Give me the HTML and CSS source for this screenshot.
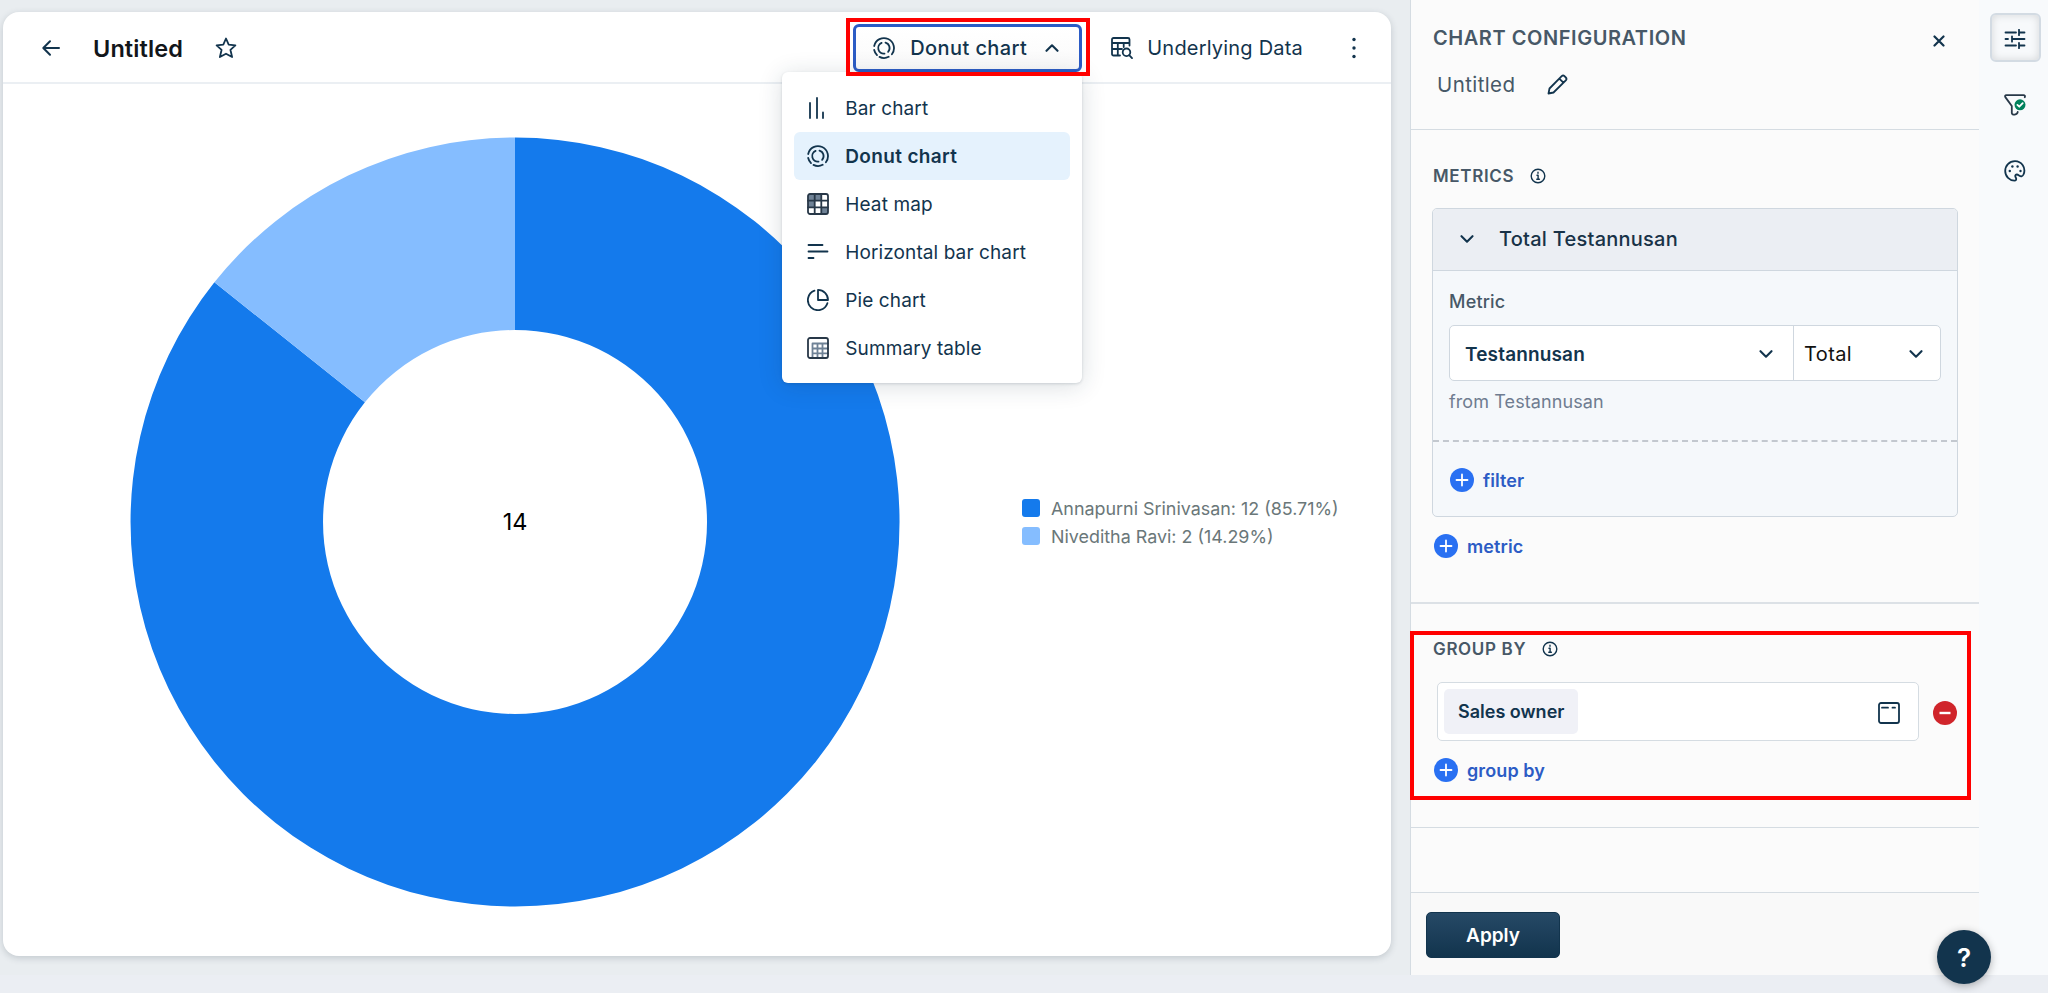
FILE: index.html
```html
<!DOCTYPE html>
<html lang="en">
<head>
    <meta charset="UTF-8">
    <meta name="viewport" content="width=device-width, initial-scale=1.0">
    <title>Untitled - Chart</title>
    <link rel="stylesheet" href="styles.css">
</head>
<body>
    <!-- Shared icons -->
    <svg class="defs" width="0" height="0">
        <symbol id="icon-donut" viewBox="0 0 22 22">
            <path d="M1.200 9A10 10 0 1 1 18.900 17.200M15.700 19.800A10 10 0 0 1 6.500 19.900M4 18.100A10 10 0 0 1 1.200 13"/>
            <path d="M8.600 5.900A5.600 5.600 0 0 0 11.500 16.600M12.500 5.600A5.600 5.600 0 0 1 15.100 14.800"/>
        </symbol>
        <symbol id="icon-down" viewBox="0 0 14 8">
            <path d="M1.500 1.200 7 6.700l5.500-5.500"/>
        </symbol>
        <symbol id="icon-info" viewBox="0 0 16 16">
            <circle cx="8" cy="8" r="6.800"/>
            <path d="M7 7.200H8.100V11.300M6.800 11.300h2.600M8 4.300v.9"/>
        </symbol>
        <symbol id="icon-plus" viewBox="0 0 24 24">
            <circle cx="12" cy="12" r="12" fill="#2970f2" stroke="none"/>
            <path d="M12 6.500v11M6.500 12h11" stroke="#fff"/>
        </symbol>
    </svg>

    <div class="page">
        <main class="chart-card">
            <header class="chart-header">
                <svg class="icon back" width="20" height="18" viewBox="0 0 20 18"><path d="M18 9H3M9 2.300 2.300 9 9 15.700"/></svg>
                <h1>Untitled</h1>
                <svg class="icon star" width="22" height="22" viewBox="0 0 22 22"><path d="M11 1.500l2.700 6.100 6.700.7-5 4.500 1.700 7.200L11 16.700 4.900 20l1.700-7.200-5-4.500 6.700-.7z"/></svg>

                <div class="type-picker">
                    <button class="type-button">
                        <svg class="icon" width="22" height="22"><use href="#icon-donut"/></svg>
                        <span>Donut chart</span>
                        <svg class="icon chevron up" width="14" height="8"><use href="#icon-down"/></svg>
                    </button>
                    <div class="highlight highlight-type"></div>
                    <ul class="type-menu">
                        <li>
                            <svg class="icon" width="22" height="22" viewBox="0 0 22 22"><path d="M3 6v15M10 1v20M16 15.500V21"/></svg>
                            Bar chart
                        </li>
                        <li class="selected">
                            <svg class="icon" width="22" height="22"><use href="#icon-donut"/></svg>
                            Donut chart
                        </li>
                        <li>
                            <svg class="icon dark" width="22" height="22" viewBox="0 0 22 22">
                                <path d="M1 1h13v7H8v6H1zM14 14h7v7h-7z" fill="#6f8296" stroke="none"/>
                                <rect x="1" y="1" width="20" height="20" rx="2"/>
                                <path d="M7.700 1v20M14.300 1v20M1 7.700h20M1 14.300h20"/>
                            </svg>
                            Heat map
                        </li>
                        <li>
                            <svg class="icon" width="22" height="22" viewBox="0 0 22 22"><path d="M1.500 4h14M1.500 10.500h19M1.500 17h5"/></svg>
                            Horizontal bar chart
                        </li>
                        <li>
                            <svg class="icon" width="22" height="22" viewBox="0 0 22 22"><path d="M7.500 1.700A10 10 0 1 0 20.400 14.200M11 .900V11h10A10 10 0 0 0 11 .9z"/></svg>
                            Pie chart
                        </li>
                        <li>
                            <svg class="icon dark" width="22" height="22" viewBox="0 0 22 22">
                                <path d="M5.500 21V6.500H21M5.500 11.500H21M5.500 16.300H21M10.500 6.500V21M15.500 6.500V21" stroke="#6f8296"/>
                                <rect x="1" y="1" width="20" height="20" rx="2"/>
                            </svg>
                            Summary table
                        </li>
                    </ul>
                </div>

                <button class="data-button">
                    <svg class="icon" width="22" height="22" viewBox="0 0 22 22">
                        <path d="M9 18.500H2.500A1.500 1.500 0 0 1 1 17V2.500A1.500 1.500 0 0 1 2.500 1H17a1.500 1.500 0 0 1 1.500 1.500V8.500M1 6h17.500M1 12h10M6.800 6v12.500M12.700 6v4"/>
                        <circle cx="15.500" cy="15.300" r="3.800"/>
                        <path d="M18.200 18.200 21 21.200"/>
                    </svg>
                    <span>Underlying Data</span>
                </button>
                <svg class="dots" width="4" height="22" viewBox="0 0 4 22"><circle cx="2" cy="2.500" r="1.700"/><circle cx="2" cy="11" r="1.700"/><circle cx="2" cy="19.500" r="1.700"/></svg>
            </header>

            <div class="chart-body">
                <svg class="donut" width="770" height="770" viewBox="-385 -385 770 770">
                    <path fill="#147aec" d="M0-384.500A384.500 384.500 0 1 1-300.600-239.700L-150.100-119.700A192 192 0 1 0 0-192z"/>
                    <path fill="#85bdff" d="M0-384.500A384.500 384.500 0 0 0-300.600-239.700L-150.100-119.700A192 192 0 0 1 0-192z"/>
                    <text x="0" y="8" text-anchor="middle">14</text>
                </svg>
                <ul class="legend">
                    <li><span class="swatch swatch-1"></span>Annapurni Srinivasan: 12 (85.71%)</li>
                    <li><span class="swatch swatch-2"></span>Niveditha Ravi: 2 (14.29%)</li>
                </ul>
            </div>
        </main>

        <aside class="config">
            <section class="config-head">
                <div class="config-title">
                    <h2>CHART CONFIGURATION</h2>
                    <svg class="icon close" width="12" height="12" viewBox="0 0 12 12"><path d="M1.500 1.500l9 9M10.500 1.500l-9 9"/></svg>
                </div>
                <div class="config-name">
                    <span>Untitled</span>
                    <svg class="icon" width="21" height="21" viewBox="0 0 21 21"><path d="M1.500 19.500l1-5L14.700 2.200a2 2 0 0 1 2.800 0l1.300 1.300a2 2 0 0 1 0 2.800L6.500 18.500zM12.300 4.600l4.100 4.100"/></svg>
                </div>
            </section>

            <section class="metrics">
                <h3>METRICS <svg class="icon thin" width="16" height="16"><use href="#icon-info"/></svg></h3>
                <div class="metric-card">
                    <div class="metric-card-head">
                        <svg class="icon chevron" width="14" height="8"><use href="#icon-down"/></svg>
                        <span>Total Testannusan</span>
                    </div>
                    <div class="metric-form">
                        <label>Metric</label>
                        <div class="select-row">
                            <div class="select select-main"><span>Testannusan</span><svg class="icon chevron" width="14" height="8"><use href="#icon-down"/></svg></div>
                            <div class="select select-total"><span>Total</span><svg class="icon chevron" width="14" height="8"><use href="#icon-down"/></svg></div>
                        </div>
                        <p>from Testannusan</p>
                    </div>
                    <a class="add"><svg class="icon" width="24" height="24"><use href="#icon-plus"/></svg>filter</a>
                </div>
                <a class="add"><svg class="icon" width="24" height="24"><use href="#icon-plus"/></svg>metric</a>
            </section>

            <section class="group-by">
                <h3>GROUP BY <svg class="icon thin" width="16" height="16"><use href="#icon-info"/></svg></h3>
                <div class="group-row">
                    <div class="group-input">
                        <span class="chip">Sales owner</span>
                        <svg class="icon" width="22" height="22" viewBox="0 0 22 22"><rect x="1" y="1" width="20" height="20" rx="2"/><path d="M4 5.700h6M14.500 5.700h2.500"/></svg>
                    </div>
                    <svg class="remove" width="24" height="24" viewBox="0 0 24 24"><circle cx="12" cy="12" r="12"/><path d="M6.500 12h11"/></svg>
                </div>
                <a class="add"><svg class="icon" width="24" height="24"><use href="#icon-plus"/></svg>group by</a>
                <div class="highlight highlight-group"></div>
            </section>

            <div class="config-rest"></div>

            <footer class="config-footer">
                <button class="apply">Apply</button>
            </footer>
        </aside>

        <nav class="rail">
            <button class="rail-button active">
                <svg class="icon" width="22" height="20" viewBox="0 0 22 20"><path d="M1.500 3.500H12M15 3.500h5.500M15 .8v5.400M1.500 10H4M8 10h12.500M8 7.300v5.400M1.500 16.500H12M15 16.500h5.500M15 13.800v5.400"/></svg>
            </button>
            <button class="rail-button">
                <svg class="icon dark" width="22" height="22" viewBox="0 0 22 22">
                    <path d="M20.800 3.200C21.300 2 20.800 1.100 19.500 1.100H2.500C1 1.100.7 2.300 1.500 3.400L7.800 12v7c0 2.600 5.700 1.800 5.900-1"/>
                    <circle cx="16" cy="10.800" r="5.500" fill="#00815c" stroke="none"/>
                    <path d="M13.400 10.900l1.900 1.800 3.400-3.600" stroke="#fff"/>
                </svg>
            </button>
            <button class="rail-button">
                <svg class="icon" width="22" height="22" viewBox="0 0 22 22">
                    <path d="M11 1.200C5.300 1.200 1.200 5.500 1.200 11S5.700 20.700 10.500 20.700C12 20.700 12.300 19.700 12.200 18.700 12 17.200 10.600 16.400 11.500 15.200 12.500 14 14 14.700 15 15.400 16.800 16.700 18.500 16.700 19.500 14.500 22.400 7.800 17.500 1.200 11 1.200z"/>
                    <g fill="#12344d" stroke="none"><circle cx="5.800" cy="11" r="1.200"/><circle cx="8.400" cy="6.500" r="1.200"/><circle cx="13.600" cy="6.500" r="1.200"/><circle cx="16.500" cy="11" r="1.200"/></g>
                </svg>
            </button>
        </nav>
    </div>

    <button class="help">?</button>
</body>
</html>
```
FILE: styles.css
```css
* {
    box-sizing: border-box;
}

body {
    margin: 0;
    height: 993px;
    overflow: hidden;
    background-color: #ebeef3;
    color: #12344d;
    font-family: Inter, "Liberation Sans", sans-serif;
    font-size: 19px;
}

h1, h2, h3, p, ul {
    margin: 0;
    padding: 0;
    list-style: none;
}

button {
    background: none;
    border: none;
    padding: 0;
    color: inherit;
    font-family: inherit;
}

svg {
    display: block;
    flex-shrink: 0;
}

.defs {
    position: absolute;
}

.icon {
    fill: none;
    stroke: #12344d;
    stroke-width: 1.8;
    stroke-linecap: round;
    stroke-linejoin: round;
}

.icon.dark {
    stroke: #283848;
}

.icon.thin {
    stroke-width: 1.4;
}

.icon.chevron {
    stroke-width: 2.1;
}

.chevron.up {
    transform: rotate(180deg);
}

.page {
    display: flex;
    height: 975px;
    background-color: #e9edf0;
}

/* Chart card */
.chart-card {
    width: 1388px;
    height: 944px;
    margin: 12px 19px 0 3px;
    background-color: #fff;
    border-radius: 16px;
    box-shadow: 0 2px 7px rgba(40, 55, 70, 0.2);
}

.chart-header {
    display: flex;
    align-items: center;
    height: 72px;
    padding: 2px 35px 0 38px;
    border-bottom: 2px solid #ebeff3;
}

.icon.back {
    stroke-width: 2;
}

.chart-header h1 {
    margin: 0 32px 0 32px;
    color: #12161a;
    font-size: 23.500px;
    font-weight: 600;
    letter-spacing: 0.1px;
    width: 90px;
    white-space: nowrap;
}

.star {
    margin-right: auto;
}

.type-picker {
    position: relative;
    margin-right: 29px;
}

.type-button {
    display: flex;
    align-items: center;
    width: 229px;
    height: 48px;
    padding: 0 20px 0 17px;
    background: linear-gradient(#fff, #fafafa);
    border: 3px solid #2c5cc5;
    border-radius: 6px;
    font-size: 20px;
    font-weight: 500;
    letter-spacing: 0.4px;
}

.type-button span {
    margin: 0 auto 0 15px;
    white-space: nowrap;
}

.highlight {
    position: absolute;
    border: 4px solid #f00;
    z-index: 3;
}

.highlight-type {
    left: -7px;
    top: -6px;
    width: 244px;
    height: 58px;
}

.type-menu {
    position: absolute;
    right: 0;
    top: 48px;
    width: 300px;
    height: 311px;
    padding: 12px;
    background-color: #fff;
    border-radius: 6px;
    box-shadow: 0 3px 24px rgba(24, 50, 71, 0.16), 0 1px 3px rgba(24, 50, 71, 0.16);
    z-index: 2;
}

.type-menu li {
    display: flex;
    align-items: center;
    gap: 16px;
    height: 48px;
    padding-left: 13px;
    border-radius: 6px;
    font-size: 19px;
    letter-spacing: 0.1px;
}

.type-menu .selected {
    background-color: #e5f2fd;
    font-weight: 600;
    letter-spacing: 0.35px;
}

.data-button {
    display: flex;
    align-items: center;
    gap: 14px;
    margin-right: 49px;
    font-size: 20px;
    letter-spacing: 0.2px;
}

.dots {
    fill: #12344d;
}

.chart-body {
    display: flex;
    align-items: center;
    padding: 53px 0 0 127px;
}

.donut text {
    fill: #000;
    font-size: 23.500px;
}

.legend {
    margin-left: 122px;
    color: #6a7779;
    font-size: 17.900px;
}

.legend li {
    display: flex;
    align-items: center;
    gap: 11px;
    height: 28px;
    white-space: nowrap;
}

.swatch {
    width: 18px;
    height: 18px;
    border-radius: 3px;
}

.swatch-1 {
    background-color: #147aec;
}

.swatch-2 {
    background-color: #85bdff;
}

/* Configuration panel */
.config {
    width: 569px;
    background-color: #fbfbfb;
    border-left: 1px solid #d5dce2;
    color: #475867;
}

.config-head {
    height: 130px;
    padding: 24px 34px 0 22px;
    border-bottom: 1px solid #d5dce2;
}

.config-title {
    display: flex;
    align-items: center;
    justify-content: space-between;
    height: 28px;
}

.config-title h2 {
    font-size: 20px;
    font-weight: 600;
    letter-spacing: 0.55px;
}

.icon.close {
    margin-top: 5px;
    stroke-width: 2.2;
}

.config-name {
    display: flex;
    align-items: center;
    gap: 32px;
    height: 28px;
    margin-top: 18px;
    padding-left: 4px;
    font-size: 20.500px;
    letter-spacing: 0.4px;
}

.config h3 {
    display: flex;
    align-items: center;
    gap: 16px;
    height: 24px;
    padding-left: 1px;
    font-size: 17px;
    font-weight: 600;
    letter-spacing: 0.65px;
}

.metrics {
    height: 474px;
    padding: 34px 21px 0;
    border-bottom: 2px solid #dce1e6;
}

.metrics h3 {
    margin-bottom: 20px;
}

.metric-card {
    width: 526px;
    height: 309px;
    margin-bottom: 17px;
    background-color: #f5f8fb;
    border: 1px solid #cfd7df;
    border-radius: 5px;
    overflow: hidden;
}

.metric-card-head {
    display: flex;
    align-items: center;
    gap: 25px;
    height: 62px;
    padding: 0 0 1px 27px;
    background-color: #ebeef3;
    border-bottom: 1px solid #cfd7df;
    color: #183247;
    font-size: 20px;
    font-weight: 500;
    letter-spacing: 0.25px;
}

.metric-form {
    height: 171px;
    padding: 19px 16px 0 16px;
    border-bottom: 2px dashed #c3c8cf;
}

.metric-form label {
    display: block;
    height: 35px;
    font-size: 18px;
    font-weight: 500;
    line-height: 23px;
    letter-spacing: 0.2px;
}

.select-row {
    display: flex;
    height: 56px;
    background-color: #fff;
    border: 1px solid #cfd7df;
    border-radius: 5px;
}

.select {
    display: flex;
    align-items: center;
    justify-content: space-between;
    padding-top: 2px;
}

.select-main {
    width: 344px;
    padding-left: 15px;
    padding-right: 20px;
    border-right: 1px solid #cfd7df;
    color: #12344d;
    font-weight: 600;
    letter-spacing: 0.15px;
}

.select-total {
    flex: 1;
    padding-left: 10px;
    padding-right: 17px;
    color: #111;
    font-size: 20px;
    letter-spacing: 0.4px;
}

.metric-form p {
    margin-top: 10px;
    color: #6f7c90;
    font-size: 18px;
    line-height: 22px;
    letter-spacing: 0.1px;
}

.add {
    display: flex;
    align-items: center;
    gap: 9px;
    height: 24px;
    margin-left: 2px;
    color: #2c5cc5;
    font-size: 18px;
    font-weight: 600;
    letter-spacing: 0.1px;
}

.metric-card .add {
    margin: 26px 0 0 17px;
}

.group-by {
    position: relative;
    height: 224px;
    padding: 33px 21px 0;
    border-bottom: 1px solid #d5dce2;
}

.group-row {
    display: flex;
    align-items: center;
    gap: 14px;
    margin: 21px 0 17px 5px;
}

.group-input {
    display: flex;
    align-items: center;
    justify-content: space-between;
    width: 482px;
    height: 59px;
    padding: 0 18px 0 6px;
    background-color: #fff;
    border: 1px solid #d5dce2;
    border-radius: 5px;
}

.group-input .icon {
    margin-top: 3px;
}

.chip {
    padding: 0 14px;
    background-color: #f0f1f7;
    border-radius: 5px;
    color: #12344d;
    font-size: 18px;
    font-weight: 600;
    line-height: 45px;
}

.remove {
    margin-top: 3px;
    fill: #d0252b;
    stroke: #fff;
    stroke-width: 2.4;
}

.remove circle {
    stroke: none;
}

.highlight-group {
    left: -1px;
    top: 27px;
    width: 561px;
    height: 169px;
}

.config-rest {
    height: 64px;
}

.config-footer {
    height: 83px;
    padding: 19px 15px 0;
    background-color: #f9f9f9;
    border-top: 1px solid #d5dce2;
}

.apply {
    width: 134px;
    height: 46px;
    background: linear-gradient(#264966, #12344d);
    border: 1px solid #12344d;
    border-radius: 5px;
    color: #fff;
    font-size: 19px;
    font-weight: 600;
}

/* Right icon rail */
.rail {
    display: flex;
    flex: 1;
    flex-direction: column;
    align-items: center;
    gap: 17px;
    padding: 13px 0 0 3px;
    background-color: #f8fafc;
}

.rail-button {
    display: flex;
    align-items: center;
    justify-content: center;
    width: 51px;
    height: 49px;
    padding-top: 2px;
}

.rail-button.active {
    background-color: #f7f9fb;
    border: 2px solid #d3dbe3;
    border-radius: 6px;
    box-shadow: inset 0 0 8px rgba(0, 0, 0, 0.14);
}

.help {
    position: absolute;
    left: 1937px;
    top: 930px;
    width: 54px;
    height: 54px;
    background-color: #12344d;
    border-radius: 50%;
    box-shadow: 0 2px 8px rgba(0, 0, 0, 0.3);
    color: #fff;
    font-size: 26px;
    font-weight: 600;
}
```
